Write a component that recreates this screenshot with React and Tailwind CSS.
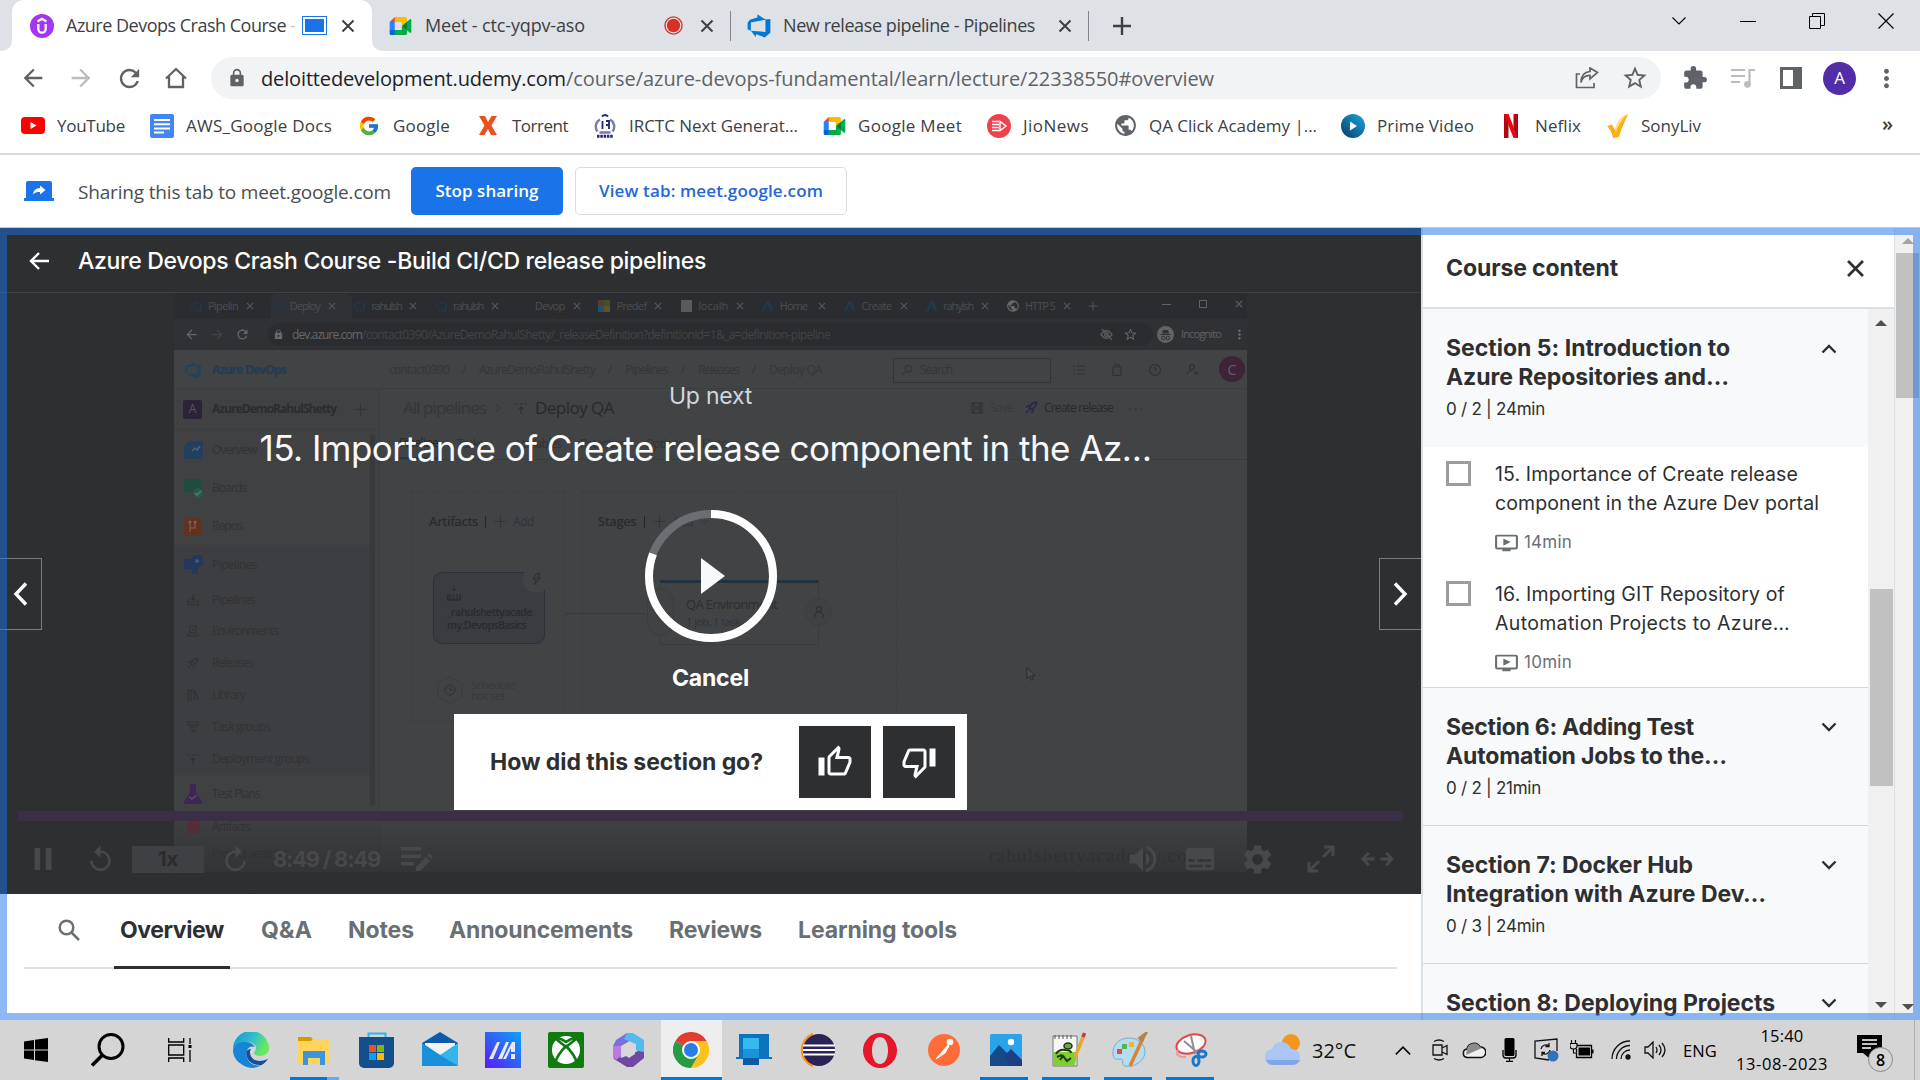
import React, { useLayoutEffect, useRef } from "react";
import {
  MdArrowBack, MdArrowForward, MdRefresh, MdLock, MdStarBorder, MdExtension,
  MdMoreVert, MdPause, MdReplay, MdVolumeUp, MdSubtitles, MdSettings, MdOutlineThumbUp, MdOutlineThumbDown,
  MdOndemandVideo, MdPublic, MdSearch,
} from "react-icons/md";
import { FcGoogle } from "react-icons/fc";

/* Single-line label whose letter spacing is adjusted to fill its own width. */
function Fit({ className = "", children }) {
  const outer = useRef(null);
  const inner = useRef(null);
  useLayoutEffect(() => {
    const el = inner.current;
    el.style.letterSpacing = "0px";
    const n = el.textContent.length;
    const free = outer.current.clientWidth - el.getBoundingClientRect().width;
    el.style.letterSpacing = `${free / n}px`;
  }, [children]);
  return (
    <span ref={outer} className={"block shrink-0 whitespace-nowrap " + className}>
      <span ref={inner} className="inline-block whitespace-pre">{children}</span>
    </span>
  );
}

/* ---------- small drawings ---------- */
const X = ({ className }) => (
  <svg viewBox="0 0 14 14" className={"shrink-0 " + className} fill="none" stroke="currentColor" strokeWidth="2">
    <path d="M1.5 1.5l11 11M12.5 1.5l-11 11" />
  </svg>
);
const Plus = ({ className }) => (
  <svg viewBox="0 0 14 14" className={"shrink-0 " + className} fill="none" stroke="currentColor">
    <path d="M7 .5v13M.5 7h13" />
  </svg>
);
const Azure = ({ className, fill = "#0078d7" }) => (
  <svg viewBox="0 0 16 16" className={"shrink-0 " + className} fill={fill}>
    <path d="M15 3.62v8.54L11.5 15 6.08 13v1.98L3 10.98l8.96.7V4.05zM12.03 4.1 7.01.8v2.02L2.4 4.2 1 5.98v4.06l1.98.86V5.8z" />
  </svg>
);
const Meet = ({ className }) => (
  <svg viewBox="0 0 24 20" className={"shrink-0 " + className}>
    <path fill="#00832d" d="M13.5 10l2.4 2.7 3.2 2 .6-4.8-.6-4.6-3.2 1.8z" />
    <path fill="#0066da" d="M0 14.5v4A1.5 1.5 0 0 0 1.5 20h4.1l.9-3-.9-2.5-2.800-.9z" />
    <path fill="#e94235" d="M5.600 0L0 5.500l2.900.8 2.700-.8.800-2.700z" />
    <path fill="#2684fc" d="M0 5.500h5.600v9H0z" />
    <path fill="#00ac47" d="M13.500 10v4.500H5.600V20h12a1.500 1.500 0 0 0 1.500-1.500v-3.800zM22.500 2.400l-3.400 2.900v9.400l3.400 2.800c.6.400 1.500 0 1.500-.7V3.100c0-.8-.9-1.100-1.500-.7z" />
    <path fill="#ffba00" d="M17.600 0h-12v5.500h7.900V10l5.600-4.700V1.500A1.500 1.500 0 0 0 17.600 0z" />
  </svg>
);
const Tick = ({ className, up, w = 2 }) => (
  <svg viewBox="0 0 16 10" className={"shrink-0 " + className} fill="none" stroke="currentColor" strokeWidth={w}>
    <path d={up ? "M1.500 8.500L8 2l6.500 6.500" : "M1.500 1.500L8 8l6.500-6.500"} />
  </svg>
);
const Replay = ({ className }) => <MdReplay className={"shrink-0 " + className} />;

/* ---------- browser chrome ---------- */
function TabStrip() {
  return (
    <div className="h-[51px] bg-[#dee1e6] flex items-center text-[#3c4043] text-[18px]">
      <div className="relative ml-[12px] w-[360px] h-full bg-white rounded-t-[12px] flex items-center">
        <svg viewBox="0 0 10 10" className="absolute -left-[10px] bottom-0 w-[10px] h-[10px]" fill="#fff"><path d="M10 0v10H0A10 10 0 0 0 10 0z" /></svg>
        <svg viewBox="0 0 10 10" className="absolute -right-[10px] bottom-0 w-[10px] h-[10px]" fill="#fff"><path d="M0 0v10h10A10 10 0 0 1 0 0z" /></svg>
        <svg viewBox="0 0 24 24" className="ml-[18px] w-[24px] h-[24px] shrink-0 mt-[1px]">
          <circle cx="12" cy="12" r="12" fill="#a435f0" />
          <path d="M7.500 7.500L12 4.800l4.500 2.700M8.300 10v5a3.700 3.700 0 0 0 7.400 0v-5" fill="none" stroke="#fff" strokeWidth="2.300" />
        </svg>
        <Fit className="ml-[12px] w-[220px]">Azure Devops Crash Course</Fit>
        <span className="w-[12px] text-[#c4c6c9] pl-[4px]">-</span>
        <div className="ml-[4px] w-[25px] h-[19px] border border-[#1a73e8] p-[2px]"><div className="w-full h-full bg-[#1a73e8]" /></div>
        <X className="ml-[14px] w-[14px] h-[14px]" />
      </div>
      <Meet className="ml-[17px] w-[23px] h-[18px]" />
      <Fit className="ml-[13px] w-[160px]">Meet - ctc-yqpv-aso</Fit>
      <svg viewBox="0 0 20 20" className="ml-[79px] w-[19px] h-[19px] shrink-0"><circle cx="10" cy="10" r="9" fill="none" stroke="#d93025" strokeWidth="1.400" /><circle cx="10" cy="10" r="7" fill="#d93025" /></svg>
      <X className="ml-[17px] w-[14px] h-[14px]" />
      <div className="ml-[16px] w-px h-[30px] bg-[#80868b]" />
      <Azure className="ml-[15px] w-[26px] h-[26px]" />
      <Fit className="ml-[11px] w-[252px]">New release pipeline - Pipelines</Fit>
      <X className="ml-[23px] w-[14px] h-[14px]" />
      <div className="ml-[16px] w-px h-[30px] bg-[#80868b]" />
      <svg viewBox="0 0 18 18" className="ml-[24px] w-[18px] h-[18px] shrink-0" stroke="#3c4043" strokeWidth="2.400"><path d="M9 0v18M0 9h18" /></svg>
      <div className="ml-auto mr-[26px] flex items-center gap-[53px] pb-[9px] text-black">
        <Tick w={1.100} className="w-[16px] h-[10px]" />
        <div className="w-[16px] h-px bg-black" />
        <svg viewBox="0 0 16 16" className="w-[16px] h-[16px]" fill="none" stroke="#000"><path d="M.5 3.500h11v12H.5zM3.500 3.500v-3h12v12h-4" /></svg>
        <svg viewBox="0 0 16 16" className="w-[16px] h-[16px]" fill="none" stroke="#000" strokeWidth="1.200"><path d="M.5.5l15 15M15.500.5l-15 15" /></svg>
      </div>
    </div>
  );
}

function Toolbar() {
  return (
    <div className="h-[54px] flex items-center text-[#5f6368] bg-white">
      <MdArrowBack className="ml-[19px] w-[28px] h-[28px] shrink-0" />
      <MdArrowForward className="ml-[20px] w-[28px] h-[28px] text-[#b9bbbe] shrink-0" />
      <MdRefresh className="ml-[20px] w-[29px] h-[29px] shrink-0" />
      <svg viewBox="0 0 22 22" className="ml-[21px] mr-[4px] w-[22px] h-[22px] shrink-0" fill="none" stroke="currentColor" strokeWidth="2.300"><path d="M1 11.500L11 2l10 9.500M4 9.500V20h4.500M18 9.500V20h-4.500M8.500 20h5" /></svg>
      <div className="ml-[20px] w-[1450px] h-[42px] rounded-full bg-[#f1f3f4] flex items-center text-[20px]">
        <MdLock className="ml-[16px] w-[20px] h-[20px]" />
        <Fit className="ml-[14px] mt-[2px] w-[305px] text-[#202124]">deloittedevelopment.udemy.com</Fit>
        <Fit className="mt-[2px] w-[648px]">/course/azure-devops-fundamental/learn/lecture/22338550#overview</Fit>
        <svg viewBox="0 0 24 22" className="ml-auto w-[24px] h-[22px]" fill="none" stroke="currentColor" strokeWidth="1.700"><path d="M5 7H1.500v13.500H19V16M6 15.500c.8-5 3.500-7 9-7.200V12l7.500-6.500L15 1v3.500C9 5 6 9 6 15.500z" /></svg>
        <MdStarBorder className="ml-[22px] mr-[12px] w-[28px] h-[28px]" />
      </div>
      <MdExtension className="ml-[21px] w-[26px] h-[26px] shrink-0" />
      <svg viewBox="0 0 24 20" className="ml-[23px] w-[24px] h-[20px] shrink-0 text-[#babcbe]" fill="none" stroke="currentColor" strokeWidth="2.200"><path d="M0 2h14M0 8h14M0 14h9M18.500 16V2H24" /><circle cx="16.500" cy="16.300" r="2.300" fill="currentColor" /></svg>
      <svg viewBox="0 0 22 22" className="ml-[25px] w-[22px] h-[22px] shrink-0"><path fill="#5f6368" fillRule="evenodd" d="M0 0h22v22H0zM3 3v16h10V3z" /></svg>
      <div className="ml-[21px] w-[33px] h-[33px] rounded-full bg-[#512da8] text-white text-[17px] flex items-center justify-center shrink-0">A</div>
      <MdMoreVert className="ml-[16px] w-[29px] h-[29px] shrink-0" />
    </div>
  );
}

function Bookmarks() {
  return (
    <div className="h-[50px] pb-[7px] flex items-center border-b-2 border-[#dadada] bg-white text-[17px] text-[#3c4043]">
      <svg viewBox="0 0 24 17" className="ml-[21px] w-[24px] h-[17px] shrink-0"><rect width="24" height="17" rx="4" fill="#f00" /><path d="M9.500 5v7l6-3.500z" fill="#fff" /></svg>
      <Fit className="ml-[12px] w-[68px]">YouTube</Fit>
      <svg viewBox="0 0 24 24" className="ml-[25px] w-[24px] h-[24px] shrink-0"><rect width="24" height="24" rx="2" fill="#4285f4" /><path d="M4 6h16M4 10.200h16M4 14.400h16M4 18.600h10" stroke="#fff" strokeWidth="2" /></svg>
      <Fit className="ml-[12px] w-[146px]">AWS_Google Docs</Fit>
      <FcGoogle className="ml-[26px] w-[22px] h-[22px] shrink-0" />
      <Fit className="ml-[13px] w-[57px]">Google</Fit>
      <svg viewBox="0 0 18 19" className="ml-[29px] w-[18px] h-[19px] shrink-0" fill="#e8501e"><path d="M0 0h6l3 6 3.500-6H18l-5.500 9.500L18 19h-6l-3-6-3.500 6H0l5.500-9.500z" /></svg>
      <Fit className="ml-[15px] w-[56px]">Torrent</Fit>
      <svg viewBox="0 0 22 24" className="ml-[26px] w-[22px] h-[24px] shrink-0" fill="none" stroke="#25257f"><path d="M6 5.500A8 8 0 0 0 3.500 17.500M16 5.500a8 8 0 0 1 2.500 12M5.500 18.500h11" strokeWidth="2.400" stroke="#7a7ab5" /><path d="M8 2.500q3-3 6 0" strokeWidth="2" /><path d="M8.500 7v8M12 7h3v8M12 11h3" strokeWidth="1.800" /><path d="M3 22.300h16" strokeWidth="3" strokeDasharray="2.500 .8" /></svg>
      <Fit className="ml-[13px] w-[169px]">IRCTC Next Generat...</Fit>
      <Meet className="ml-[25px] w-[23px] h-[18px]" />
      <Fit className="ml-[12px] w-[104px]">Google Meet</Fit>
      <svg viewBox="0 0 24 24" className="ml-[25px] w-[24px] h-[24px] shrink-0"><circle cx="12" cy="12" r="12" fill="#f0424e" /><path d="M5 7.500h7M5 10.500h7M5 13.500h7M5 16.500h7" stroke="#fff" strokeWidth="1.500" /><path d="M13 7.500v9l6-4.500z" stroke="#fff" strokeWidth="1.400" fill="none" /></svg>
      <Fit className="ml-[12px] w-[66px]">JioNews</Fit>
      <MdPublic className="ml-[24px] w-[25px] h-[25px] shrink-0 text-[#5f6368]" />
      <Fit className="ml-[11px] w-[168px]">QA Click Academy |...</Fit>
      <svg viewBox="0 0 24 24" className="ml-[24px] w-[24px] h-[24px] shrink-0"><defs><linearGradient id="pv" x1="1" y1="0" x2="0" y2="1"><stop stopColor="#1ba8dd" /><stop offset="1" stopColor="#063a6b" /></linearGradient></defs><circle cx="12" cy="12" r="12" fill="url(#pv)" /><path d="M9 7.500v9l7-4.500z" fill="#fff" /></svg>
      <Fit className="ml-[12px] w-[97px]">Prime Video</Fit>
      <svg viewBox="0 0 14 24" className="ml-[30px] w-[14px] h-[24px] shrink-0"><path d="M0 0h4.500v24H0zM9.500 0H14v24H9.500z" fill="#b1060f" /><path d="M0 0h4.500L14 24H9.500z" fill="#e50914" /></svg>
      <Fit className="ml-[17px] w-[46px]">Neflix</Fit>
      <svg viewBox="0 0 22 24" className="ml-[26px] w-[22px] h-[24px] shrink-0"><path d="M0 12l5-1.500 3 5.500C10 8 14 2 21 0c-1 3-7 15-9 23l-6 1C5 19 3 15 0 12z" fill="#fcaf17" /><path d="M21 0c-7 2-11 8-13 16l1 2C12 9 16 4 21 0z" fill="#fde27b" /></svg>
      <Fit className="ml-[12px] w-[60px]">SonyLiv</Fit>
      <span className="ml-auto mr-[27px] text-[20px] leading-none pb-[3px] text-[#3c4043] font-semibold">»</span>
    </div>
  );
}

function SharingBar() {
  return (
    <div className="h-[73px] bg-white flex items-center text-[#4a4d51] border-b border-[#c9c9cb]">
      <svg viewBox="0 0 30 20" className="ml-[24px] w-[30px] h-[20px] shrink-0"><path fill="#1a73e8" d="M2 2a2 2 0 0 1 2-2h22a2 2 0 0 1 2 2v15h2v3H0v-3h2z" /><path fill="#fff" d="M9 13.500c.6-4.500 3-6.200 7-6.500V4.500l5.500 4.500-5.500 4.500V11c-3.500 0-5 .5-7 2.500z" /></svg>
      <Fit className="ml-[24px] mt-[2px] w-[313px] text-[19px]">Sharing this tab to meet.google.com</Fit>
      <div className="ml-[20px] w-[152px] h-[48px] rounded-[5px] bg-[#1a73e8] flex items-center justify-center text-white font-semibold text-[17px]"><Fit className="w-[103px]">Stop sharing</Fit></div>
      <div className="ml-[12px] w-[272px] h-[48px] rounded-[5px] border border-[#dadce0] flex items-center justify-center text-[#2566d8] font-semibold text-[17px]"><Fit className="w-[224px]">View tab: meet.google.com</Fit></div>
    </div>
  );
}

/* ---------- dimmed lecture frame ---------- */
function FrameTab({ icon, text, active, w = "w-[30px]" }) {
  return (
    <div className={"h-[25px] w-[81.7px] flex items-center shrink-0 " + (active ? "bg-[#303135] rounded-t-[6px]" : "")}>
      <span className="w-[14px] h-[14px] flex items-center justify-center shrink-0">
        {icon === "az" && <Azure className="w-[13px] h-[13px]" fill="#1f3747" />}
        {icon === "ms" && <svg viewBox="0 0 12 12" className="w-[12px] h-[12px]"><path fill="#5c3a2a" d="M0 0h6v6H0z" /><path fill="#3f5329" d="M6 0h6v6H6z" /><path fill="#24506a" d="M0 6h6v6H0z" /><path fill="#625127" d="M6 6h6v6H6z" /></svg>}
        {icon === "box" && <span className="w-[11px] h-[12px] bg-[#5a5a58]" />}
        {icon === "a" && <svg viewBox="0 0 12 12" className="w-[13px] h-[12px]"><path fill="#20394c" d="M0 11L5 1h3l4 10H9L6 4 3 11z" /></svg>}
        {icon === "web" && <MdPublic className="w-[14px] h-[14px] text-[#66686a]" />}
      </span>
      <span className="ml-[5px] w-[31px] flex text-[11px] text-[#4c4e51]"><Fit className={w}>{text}</Fit></span>
      <X className="ml-[7px] w-[8px] h-[8px] text-[#55575a]" />
    </div>
  );
}

const NavItem = ({ h, glyph, w, children }) => (
  <div className={"flex items-center shrink-0 " + h}>
    <span className="ml-[9px] w-[20px] h-[20px] flex items-center justify-center">{glyph}</span>
    <Fit className={"ml-[9px] text-[12px] " + w}>{children}</Fit>
  </div>
);
const Glyph = ({ d }) => <svg viewBox="0 0 12 12" className="w-[12px] h-[12px]" fill="none" stroke="#2f3032" strokeWidth="1.100"><path d={d} /></svg>;
const Build = () => <svg viewBox="0 0 14 16" className="w-[14px] h-[16px]" fill="none" stroke="#2b2c2e"><path d="M.8 9v6h12.400V9" strokeWidth="1.500" /><path d="M7 0v6M5 4l2 2 2-2" /><path d="M2 10.500h10M2 13.500h10" strokeWidth="2" strokeDasharray="2 1.500" /></svg>;

function LectureFrame() {
  return (
    <div className="ml-[174px] w-[1073px] h-[601px] bg-[#424345] flex flex-col overflow-hidden text-[#323335]">
      <div className="h-[26px] bg-[#2b2c2f] flex items-center pl-[15px] shrink-0">
        <FrameTab icon="az" text="Pipelin" /><FrameTab icon="az" text="Deploy" active /><FrameTab icon="az" text="rahulsh" />
        <FrameTab icon="az" text="rahulsh" /><FrameTab text="Devop" /><FrameTab icon="ms" text="Predef" />
        <FrameTab icon="box" text="localh" /><FrameTab icon="a" text="Home" w="w-[27px]" /><FrameTab icon="a" text="Create" />
        <FrameTab icon="a" text="rahylsh" /><FrameTab icon="web" text="HTTP S" />
        <Plus className="w-[10px] h-[10px] text-[#606264]" />
        <div className="ml-auto mr-[4px] pb-[4px] flex items-center gap-[28px] text-[#606264]">
          <span className="w-[9px] h-px bg-[#606264]" /><span className="w-[8px] h-[8px] border border-[#606264]" /><X className="w-[8px] h-[8px]" />
        </div>
      </div>
      <div className="h-[31px] bg-[#303135] flex items-center text-[12px] text-[#434446] shrink-0">
        <MdArrowBack className="ml-[10px] w-[15px] h-[15px] text-[#66686a]" />
        <MdArrowForward className="ml-[11px] w-[15px] h-[15px]" />
        <MdRefresh className="ml-[10px] w-[15px] h-[15px] text-[#66686a]" />
        <div className="ml-[18px] h-[23px] w-[885px] rounded-full bg-[#2b2c2f] flex items-center">
          <MdLock className="ml-[5px] w-[11px] h-[11px] text-[#66686a]" />
          <Fit className="ml-[8px] mt-[1px] w-[70px] text-[#66686a]">dev.azure.com</Fit>
          <Fit className="mt-[1px] w-[468px]">/contact0390/AzureDemoRahulShetty/_releaseDefinition?definitionId=1&amp;_a=definition-pipeline</Fit>
          <svg viewBox="0 0 14 14" className="ml-auto w-[13px] h-[13px]" fill="none" stroke="#57595b" strokeWidth="1.500"><path d="M1 7q6-8 12 0-6 8-12 0zM2 1l11 12" /><circle cx="7" cy="7" r="2" /></svg>
          <MdStarBorder className="ml-[10px] mr-[15px] w-[15px] h-[15px] text-[#66686a]" />
        </div>
        <svg viewBox="0 0 17 17" className="ml-[4px] w-[17px] h-[17px]"><circle cx="8.500" cy="8.500" r="8.500" fill="#626466" /><path d="M6 4h5l1 3.500H5zM3.500 8h10v1h-10z" fill="#303135" /><path d="M4.500 12a1.800 1.800 0 1 1 3.600 0 1.800 1.800 0 0 1-3.600 0M9 12a1.800 1.800 0 1 1 3.600 0A1.800 1.800 0 0 1 9 12" fill="none" stroke="#303135" /></svg>
        <Fit className="ml-[7px] w-[40px] text-[11px] text-[#5f6163]">Incognito</Fit>
        <MdMoreVert className="ml-auto w-[15px] h-[15px] text-[#66686a]" />
      </div>
      <div className="h-[39px] pt-[2px] flex items-center text-[12px] text-[#353638] border-b border-[#3c3d3f] shrink-0">
        <Azure className="ml-[10px] w-[18px] h-[18px]" fill="#21435d" />
        <Fit className="ml-[10px] w-[74px] font-bold text-[#213c53]">Azure DevOps</Fit>
        <Fit className="ml-[103px] w-[60px]">contact0390</Fit><span className="w-[30px] text-center">/</span>
        <Fit className="w-[116px]">AzureDemoRahulShetty</Fit><span className="w-[30px] text-center">/</span>
        <Fit className="w-[43px]">Pipelines</Fit><span className="w-[30px] text-center">/</span>
        <Fit className="w-[41px]">Releases</Fit><span className="w-[30px] text-center">/</span>
        <Fit className="w-[53px]">Deploy QA</Fit>
        <div className="ml-[71px] w-[158px] h-[25px] border border-[#333436] flex items-center"><MdSearch className="ml-[6px] w-[14px] h-[14px] -scale-x-100" /><Fit className="ml-[6px] w-[32px]">Search</Fit></div>
        <div className="ml-[22px] flex items-center gap-[26px]">
          <Glyph d="M0 2h2M4 2h8M0 6h2M4 6h8M0 10h2M4 10h8" /><Glyph d="M2 3h8v8.500H2zM4 3V.8h4V3" /><Glyph d="M6 .6a5.400 5.400 0 1 1 0 10.800A5.400 5.400 0 0 1 6 .6M4.500 4.500q1.500-2 2.700 0Q7 6 6 6v1.500" /><Glyph d="M5 .6a2.500 2.500 0 1 1 0 5 2.500 2.500 0 0 1 0-5M0 11q1-5 5-5M7 9h4M9 7v4" />
        </div>
        <span className="ml-auto mr-[2px] mb-[2px] w-[26px] h-[26px] rounded-full bg-[#3d2437] text-[#66606a] text-[14px] flex items-center justify-center">C</span>
      </div>
      <div className="h-[483px] flex shrink-0">
        <div className="w-[206px] bg-[#404143] flex flex-col border-r border-[#3c3d3f]">
          <div className="h-[41px] flex items-center border-b border-[#3b3c3e] shrink-0">
            <span className="ml-[9px] w-[19px] h-[19px] rounded-[2px] bg-[#2d2337] text-[#5a5560] text-[12px] flex items-center justify-center">A</span>
            <Fit className="ml-[10px] w-[124px] text-[12px] font-bold text-[#2b2c2e]">AzureDemoRahulShetty</Fit>
            <Plus className="ml-[18px] w-[13px] h-[13px]" />
          </div>
          <div className="flex-1 flex">
            <div className="w-[196px]">
              <NavItem w="w-[45px]" h="h-[39px]" glyph={<svg viewBox="0 0 19 18" className="w-[19px] h-[18px]"><path fill="#233f5c" d="M5 0h14v18H0V6z" /><path d="M8 10l3-3 2 2 3-4" stroke="#4a6178" fill="none" strokeWidth="1.500" /></svg>}>Overview</NavItem>
              <NavItem w="w-[34px]" h="h-[38px]" glyph={<svg viewBox="0 0 19 19" className="w-[19px] h-[19px]"><path fill="#1f4b41" d="M0 0h17v13H0z" /><circle cx="14" cy="14" r="5" fill="#28594d" /><path d="M11 14l2 2 4-4" stroke="#5b766f" fill="none" strokeWidth="1.500" /></svg>}>Boards</NavItem>
              <NavItem w="w-[30px]" h="h-[38px]" glyph={<svg viewBox="0 0 18 19" className="w-[18px] h-[19px]"><path fill="#64301f" d="M4 0h10l4 4v15H0V4z" /><path d="M6 15V6M6 11h5V6" stroke="#84604f" fill="none" strokeWidth="1.200" /><circle cx="6" cy="5" r="1.500" fill="#84604f" /><circle cx="11" cy="5" r="1.500" fill="#84604f" /></svg>}>Repos</NavItem>
              <div className="bg-[#3d3e41] pb-[1px]">
                <NavItem w="w-[45px]" h="h-[39px]" glyph={<svg viewBox="0 0 19 19" className="w-[19px] h-[19px]"><path fill="#25365f" d="M0 4h7l3-4h9v9l-5 4v6H8v-5H0z" /><circle cx="13" cy="6" r="2" fill="#4a5878" /></svg>}>Pipelines</NavItem>
                <NavItem w="w-[43px]" h="h-[31px]" glyph={<Glyph d="M1 5v6h10V5M3 8h6M6 0v6M4 4l2 2 2-2" />}>Pipelines</NavItem>
                <NavItem w="w-[66px]" h="h-[32px]" glyph={<Glyph d="M3 1h6v7H3zM1 8v3h10V8M6 3v3" />}>Environments</NavItem>
                <NavItem w="w-[41px]" h="h-[32px]" glyph={<Glyph d="M11 1Q5 1 4 8Q10 7 11 1M4 4L1 6M8 8l-2 3M3 9l-2 2" />}>Releases</NavItem>
                <NavItem w="w-[33px]" h="h-[32px]" glyph={<Glyph d="M1 1v10h3V1zM4 1h3v10M8 2l3 9" />}>Library</NavItem>
                <NavItem w="w-[58px]" h="h-[32px]" glyph={<Glyph d="M1 1h10v3H1zM2 6h8M3 9h6M4 11h4" />}>Task groups</NavItem>
                <NavItem w="w-[97px]" h="h-[31px]" glyph={<Glyph d="M0 2h3M5 2h3M9.500 2h3M6 6v6M4 7l2-2 2 2" />}>Deployment groups</NavItem>
              </div>
              <NavItem w="w-[48px]" h="h-[37px]" glyph={<svg viewBox="0 0 18 20" className="w-[18px] h-[20px]"><path fill="#3d2654" d="M6 0h6v8l6 10v2H0v-2L6 8z" /><path d="M5 13l3 2 5-4" stroke="#5e4a70" fill="none" strokeWidth="1.500" /></svg>}>Test Plans</NavItem>
              <NavItem w="w-[38px]" h="h-[29px]" glyph={<span className="w-[13px] h-[13px] bg-[#5e2c38]" />}>Artifacts</NavItem>
              <div className="pl-[38px] text-[12px] pt-[4px]"><Fit className="w-[75px]">Project settings</Fit></div>
            </div>
            <span className="w-[5px] h-[370px] mt-[5px] bg-[#38393b]" />
          </div>
        </div>
        <div className="relative flex-1 flex flex-col">
          <div className="h-[39px] pb-[2px] flex items-center shrink-0">
            <Fit className="ml-[23px] w-[83px] text-[17px] text-[#353638]">All pipelines</Fit>
            <svg viewBox="0 0 6 10" className="ml-[9px] w-[6px] h-[10px]" fill="none" stroke="#333"><path d="M1 1l4 4-4 4" /></svg>
            <span className="ml-[14px] flex"><Glyph d="M0 2h3M5 2h3M9.500 2h3M6 6v6M4 7l2-2 2 2" /></span>
            <Fit className="ml-[8px] w-[79px] text-[17px] text-[#28292b]">Deploy QA</Fit>
            <div className="ml-auto mr-[102px] flex items-center text-[12px]">
              <Glyph d="M1 1h10v10H1zM3 1v4h6V1M3 11V7h6v4" /><Fit className="ml-[7px] w-[23px] text-[#3a3b3d]">Save</Fit>
              <svg viewBox="0 0 12 12" className="ml-[12px] w-[13px] h-[13px]" fill="none" stroke="#262a48" strokeWidth="1.600"><path d="M11 1Q5 1 4 8Q10 7 11 1M4 4L1 6M8 8l-2 3M3 9l-2 2" /></svg>
              <Fit className="ml-[6px] w-[69px] text-[#27282a]">Create release</Fit><span className="ml-[15px] tracking-[2px] text-[14px] leading-none pb-[6px]">...</span>
            </div>
          </div>
          <div className="h-[32px] border-b border-[#3b3c3e] flex items-center text-[12px] gap-[19px] pl-[19px] shrink-0">
            <div className="h-full flex items-center border-b-2 border-[#203a50] text-[#242526]"><Fit className="w-[39px]">Pipeline</Fit></div>
            <Fit className="w-[26px]">Tasks</Fit><Fit className="ml-[15px] w-[44px]">Variables</Fit><Fit className="w-[46px]">Retention</Fit><Fit className="w-[38px]">Options</Fit><Fit className="w-[35px]">History</Fit>
          </div>
          <div className="flex pt-[31px] pl-[32px] gap-[17px]">
            <div className="relative w-[153px] h-[231px] border border-dashed border-[#3c3d3f]">
              <div className="absolute left-[152px] top-[121px] w-[80px] h-px bg-[#38393b]" />
              <div className="h-[59px] flex items-center text-[13px] pl-[16px]"><Fit className="w-[49px] font-semibold text-[#2a2b2d]">Artifacts</Fit><span className="ml-[7px] w-px h-[12px] bg-[#242526]" /><Plus className="ml-[8px] w-[13px] h-[13px]" /><Fit className="ml-[6px] w-[21px] text-[12px] text-[#2a3540]">Add</Fit></div>
              <div className="relative mt-[21px] ml-[20px] w-[112px] h-[72px] rounded-[9px] border border-[#2b3039] bg-[#3a3c42] pl-[13px] pt-[12px] leading-[12.500px] text-[10.500px] font-semibold text-[#292a2c]">
                <Build />
                <Fit className="mt-[5px] w-[85px]">_rahulshettyacade</Fit><Fit className="w-[79px]">my.DevopsBasics</Fit>
                <span className="absolute -right-[5px] -top-[8px] w-[26px] h-[28px] rounded-full bg-[#424345] flex items-center justify-center"><Glyph d="M7 0L3 6h3L4 12l6-7H7.500L10 0z" /></span>
              </div>
              <div className="mt-[32px] ml-[24px] flex items-center gap-[8px] text-[11px] leading-[11px] text-[#38393b]">
                <svg viewBox="0 0 26 28" className="w-[26px] h-[28px]" fill="none" stroke="#3c3d3f"><path d="M13 1l12 6v14l-12 6-12-6V7z" /><circle cx="13" cy="14" r="5" stroke="#2f3032" /><path d="M13 11v3h3" stroke="#2f3032" /></svg>
                <div><Fit className="w-[44px]">Schedule</Fit><Fit className="w-[34px]">not set</Fit></div>
              </div>
            </div>
            <div className="w-[315px] h-[231px] border border-dashed border-[#3c3d3f]">
              <div className="h-[59px] flex items-center text-[13px] pl-[15px]"><Fit className="w-[38px] font-semibold text-[#2a2b2d]">Stages</Fit><span className="ml-[8px] w-px h-[12px] bg-[#242526]" /><Plus className="ml-[8px] w-[13px] h-[13px]" /><Fit className="ml-[6px] w-[21px] text-[12px] text-[#2a3540]">Add</Fit><Tick w={1.500} className="ml-[7px] w-[9px] h-[6px]" /></div>
              <div className="relative mt-[29px] ml-[77px] w-[159px] h-[65px] border border-[#3b3c3e] border-t-[3px] border-t-[#22313d] pl-[25px] pt-[12px]">
                <Fit className="w-[91px] text-[13px] leading-[19px] text-[#2d2e30]">QA Environment</Fit><Fit className="w-[54px] text-[11px] leading-[15px] text-[#2b343d]">1 job, 1 task</Fit>
                <span className="absolute -right-[14px] top-[15px] w-[27px] h-[28px] rounded-full bg-[#404143] border border-[#3e3f41] flex items-center justify-center"><Glyph d="M6 .6a2.500 2.500 0 1 1 0 5 2.500 2.500 0 0 1 0-5M1.500 11.500q0-5 4.500-5.500 4.500.5 4.500 5.500" /></span>
                <span className="absolute -left-[14px] top-[5px] w-[27px] h-[48px] rounded-full border border-[#3b3c3e] bg-[#414244]" />
              </div>
            </div>
          </div>
          <svg viewBox="0 0 12 16" className="absolute left-[646px] top-[277px] w-[11px] h-[16px]" fill="#4b4c4e" stroke="#29292b"><path d="M1 1v12l3-3 2 5 2-1-2-4h4z" /></svg>
          <div className="absolute left-[609px] top-[453px] font-['Liberation_Serif'] text-[19px]"><Fit className="w-[215px]">rahulshettyacademy.com</Fit></div>
        </div>
      </div>
      <div className="flex-1 bg-[#2b2d2f] flex items-center text-[11px] text-[#393b3c]"><span className="ml-[70px] tracking-[0.5px]">Type here to search</span></div>
    </div>
  );
}

/* ---------- player ---------- */
function Player() {
  return (
    <div className="relative w-[1421px] h-[666px] bg-[#2d2f31] overflow-hidden">
      <div className="h-[65px] border-b border-[#3e4143] flex items-center pt-[2px]">
        <svg viewBox="0 0 20 18" className="ml-[29px] w-[20px] h-[18px]" fill="none" stroke="#fff" strokeWidth="2.400"><path d="M20 9H2M10 1L2 9l8 8" /></svg>
        <Fit className="ml-[29px] w-[628px] text-[23px] font-medium text-white">Azure Devops Crash Course -Build CI/CD release pipelines</Fit>
      </div>
      <div className="font-['Open_Sans',sans-serif]"><LectureFrame /></div>

      {/* playback controls */}
      <div className="absolute inset-x-0 bottom-0 h-[84px] bg-gradient-to-b from-transparent to-[#2d2f31] text-[#46484b]">
        <div className="mx-[18px] mt-[1px] h-[10px] bg-[#3a2f45]" />
        <div className="mt-[11px] h-[54px] flex items-center">
          <MdPause className="ml-[26px] w-[34px] h-[38px]" preserveAspectRatio="none" />
          <Replay className="ml-[25px] w-[31px] h-[31px]" />
          <div className="ml-[16px] w-[72px] h-[27px] bg-[#3e4044] text-[#292b2d] text-[20px] font-bold flex items-center justify-center">1x</div>
          <Replay className="ml-[16px] w-[31px] h-[31px] -scale-x-100" />
          <Fit className="ml-[22px] w-[107px] text-[22px] font-bold">8:49 / 8:49</Fit>
          <svg viewBox="0 0 32 26" className="ml-[21px] w-[32px] h-[26px]" fill="currentColor"><path d="M0 1h20v3.500H0zM0 8.500h20V12H0zM0 16h13v3.500H0zM15 21l10-10 4 4-10 10h-4zM26.500 9.500l2-2 3.500 3.500-2 2z" /></svg>
          <MdVolumeUp className="ml-auto w-[36px] h-[36px]" />
          <MdSubtitles className="ml-[21px] w-[36px] h-[34px]" />
          <MdSettings className="ml-[22px] w-[35px] h-[35px]" />
          <svg viewBox="0 0 28 28" className="ml-[32px] w-[28px] h-[28px]" fill="none" stroke="currentColor" strokeWidth="3"><path d="M17 2h9v9M26 2L16 12M2 17v9h9M2 26l10-10" /></svg>
          <svg viewBox="0 0 34 16" className="ml-[26px] mr-[27px] w-[33px] h-[16px]" fill="none" stroke="currentColor" strokeWidth="3"><path d="M8 1.500L2 8l6 6.500M26 1.500L32 8l-6 6.500M2 8h12M20 8h12" /></svg>
        </div>
      </div>

      {/* up-next prompt */}
      <div className="absolute inset-x-0 top-[149px] flex flex-col items-center text-white">
        <Fit className="w-[83px] text-[23px] leading-[38px] text-[#d1d7dc]">Up next</Fit>
        <Fit className="w-[892px] mt-[11px] -ml-[10px] text-[35px] leading-[44px] text-[#f7f9fa]">15. Importance of Create release component in the Az…</Fit>
        <svg viewBox="0 0 132 132" className="mt-[40px] w-[132px] h-[132px]">
          <circle cx="66" cy="66" r="62" fill="none" stroke="#6a6f73" strokeWidth="8" />
          <circle cx="66" cy="66" r="62" fill="none" stroke="#fff" strokeWidth="8" pathLength="100" strokeDasharray="80.800 100" transform="rotate(-90 66 66)" />
          <path d="M56 48v36l24-18z" fill="#f7f9fa" />
        </svg>
        <Fit className="mt-[17px] w-[77px] text-[23px] leading-[38px] font-bold">Cancel</Fit>
        <div className="mt-[17px] w-[513px] h-[96px] bg-white flex items-center text-[#2d2f31]">
          <Fit className="ml-[36px] w-[273px] text-[23px] font-bold">How did this section go?</Fit>
          <div className="ml-[36px] w-[72px] h-[72px] bg-[#2d2f31] flex items-center justify-center"><MdOutlineThumbUp className="w-[36px] h-[36px] text-white" /></div>
          <div className="ml-[12px] w-[72px] h-[72px] bg-[#2d2f31] flex items-center justify-center"><MdOutlineThumbDown className="w-[36px] h-[36px] text-white" /></div>
        </div>
      </div>

      <div className="absolute left-0 top-[330px] w-[42px] h-[72px] border border-l-0 border-[#7a7c7e] bg-[#2d2f31] flex items-center justify-center">
        <svg viewBox="0 0 15 24" className="w-[15px] h-[24px]" fill="none" stroke="#fff" strokeWidth="3.400"><path d="M13 1.500L3 12l10 10.500" /></svg>
      </div>
      <div className="absolute right-0 top-[330px] w-[42px] h-[72px] border border-r-0 border-[#7a7c7e] bg-[#2d2f31] flex items-center justify-center">
        <svg viewBox="0 0 15 24" className="w-[15px] h-[24px]" fill="none" stroke="#fff" strokeWidth="3.400"><path d="M2 1.500L12 12 2 22.500" /></svg>
      </div>
    </div>
  );
}

function CourseTabs() {
  return (
    <div className="ml-[24px] w-[1373px] h-[75px] border-b-2 border-[#d9e1e7] flex items-center text-[23px] font-bold text-[#6a6f73]">
      <svg viewBox="0 0 22 22" className="ml-[34px] -mt-[1px] w-[22px] h-[22px]" fill="none" stroke="currentColor" strokeWidth="2.500"><circle cx="8.500" cy="8.500" r="6.800" /><path d="M13.500 13.500l7.500 7.500" /></svg>
      <div className="relative ml-[34px] w-[116px] h-[75px] -mb-[2px] flex items-center justify-center border-b-[3px] border-[#2d2f31] text-[#2d2f31]"><Fit className="w-[104px]">Overview</Fit></div>
      <Fit className="ml-[31px] w-[51px]">Q&amp;A</Fit>
      <Fit className="ml-[36px] w-[66px]">Notes</Fit>
      <Fit className="ml-[35px] w-[184px]">Announcements</Fit>
      <Fit className="ml-[36px] w-[93px]">Reviews</Fit>
      <Fit className="ml-[36px] w-[159px]">Learning tools</Fit>
    </div>
  );
}

/* ---------- course sidebar ---------- */
function Section({ a, b, sub, open, className = "" }) {
  return (
    <div className={"h-[138px] shrink-0 bg-[#f7f9fa] pl-[23px] pt-[25px] flex text-[#2d2f31] " + className}>
      <div className="w-[375px] text-[23px] leading-[29px] font-bold">
        {a}{b}
        <div className="mt-[4px] text-[17px] leading-[26px] font-normal">{sub}</div>
      </div>
      <Tick up={open} w={2.400} className={open ? "mt-[10px] w-[16px] h-[10px]" : "mt-[9px] w-[16px] h-[10px]"} />
    </div>
  );
}
function Lecture({ a, b, time }) {
  return (
    <div className="h-[120px] shrink-0 bg-white pl-[23px] pt-[13px] flex text-[#2d2f31]">
      <div className="mt-[1px] w-[25px] h-[25px] border-[3px] border-[#9a9c9e] shrink-0" />
      <div className="ml-[24px] text-[19.500px] leading-[29px]">
        {a}{b}
        <div className="mt-[10px] h-[29px] flex items-center text-[17px] text-[#6a6f73]">
          <MdOndemandVideo className="-ml-[1px] w-[25px] h-[22px]" preserveAspectRatio="none" />
          <Fit className="ml-[5px] w-[48px]">{time}</Fit>
        </div>
      </div>
    </div>
  );
}
const Tri = ({ down, fill }) => <svg viewBox="0 0 12 6" className="w-[12px] h-[6px]" fill={fill}><path d={down ? "M0 0h12L6 6z" : "M0 6h12L6 0z"} /></svg>;

function Sidebar() {
  return (
    <div className="w-[474px] h-[792px] border-l-2 border-r border-[#d9e1e7] bg-white flex flex-col overflow-hidden">
      <div className="h-[81px] pt-[2px] flex items-center border-b-2 border-[#d9e1e7] shrink-0 text-[#2d2f31]">
        <Fit className="ml-[23px] w-[172px] text-[23px] font-bold">Course content</Fit>
        <X className="ml-auto mr-[29px] w-[19px] h-[19px]" />
      </div>
      <div className="flex-1 min-h-0 flex">
        <div className="w-[445px] flex flex-col overflow-hidden">
          <Section open a={<Fit className="w-[284px]">Section 5: Introduction to</Fit>} b={<Fit className="w-[283px]">Azure Repositories and…</Fit>} sub={<Fit className="w-[99px]">0 / 2 | 24min</Fit>} />
          <Lecture a={<Fit className="w-[303px]">15. Importance of Create release</Fit>} b={<Fit className="w-[324px]">component in the Azure Dev portal</Fit>} time="14min" />
          <Lecture a={<Fit className="w-[290px]">16. Importing GIT Repository of</Fit>} b={<Fit className="w-[295px]">Automation Projects to Azure…</Fit>} time="10min" />
          <Section className="border-t border-[#d1d7dc]" a={<Fit className="w-[248px]">Section 6: Adding Test</Fit>} b={<Fit className="w-[281px]">Automation Jobs to the…</Fit>} sub={<Fit className="w-[95px]">0 / 2 | 21min</Fit>} />
          <Section className="border-t border-[#d1d7dc]" a={<Fit className="w-[247px]">Section 7: Docker Hub</Fit>} b={<Fit className="w-[320px]">Integration with Azure Dev…</Fit>} sub={<Fit className="w-[99px]">0 / 3 | 24min</Fit>} />
          <Section className="border-t border-[#d1d7dc]" a={<Fit className="w-[329px]">Section 8: Deploying Projects</Fit>} />
        </div>
        <div className="w-[26px] bg-[#f0f0f0] flex flex-col items-center pt-[11px] pb-[12px]">
          <Tri fill="#505050" />
          <div className="mt-[263px] w-[23px] h-[197px] bg-[#c1c1c1]" />
          <div className="flex-1" />
          <Tri down fill="#505050" />
        </div>
      </div>
    </div>
  );
}

/* ---------- Windows taskbar ---------- */
const Slot = ({ className = "", children }) => <div className={"w-[36px] h-[36px] shrink-0 " + className}>{children}</div>;
const Ico = ({ children }) => <svg viewBox="0 0 36 36" className="w-full h-full">{children}</svg>;
const Running = () => <div className="absolute -left-[8px] -bottom-[12px] w-[48px] h-[3px] bg-[#0078d7]" />;

function Taskbar() {
  return (
    <div className="h-[60px] bg-[#d5d5d6] flex items-center font-['Open_Sans',sans-serif]">
      <svg viewBox="0 0 24 24" className="ml-[24px] w-[24px] h-[24px] shrink-0"><path d="M0 3.400l10-1.400v9.400H0zM11 1.800L24 0v11.400H11zM0 12.400h10V22L0 20.600zM11 12.400h13V24l-13-1.800z" /></svg>
      <svg viewBox="0 0 34 34" className="ml-[43px] w-[34px] h-[34px] shrink-0" fill="none" stroke="#000" strokeWidth="3"><circle cx="20" cy="13.500" r="12" /><path d="M11.500 22L1 32.500" strokeWidth="3.500" /></svg>
      <svg viewBox="0 0 24 24" className="ml-[43px] w-[24px] h-[24px] shrink-0" fill="none" stroke="#000" strokeWidth="1.300"><path d="M.7 0v4h15V0M.7 7h15v10H.7zM.7 24v-4h15v4M22 0v6M22 12v12" /><path d="M20.500 7h3v3h-3z" fill="#000" stroke="none" /></svg>
      <Slot className="ml-[41px]"><Ico>
        <defs><linearGradient id="eg" x1="0" y1="0" x2="1" y2=".4"><stop stopColor="#0d90d8" /><stop offset=".6" stopColor="#35c1c9" /><stop offset="1" stopColor="#66eb5a" /></linearGradient></defs>
        <path d="M0 18a18 18 0 0 1 36-2c0 5-4 8-9 8-4 0-6-2-6-3s2-2 2-5-4-6-9-6C7 10 0 14 0 18z" fill="url(#eg)" />
        <path d="M0 18C1 12 7 9.500 13 10c5 0 8 3 8.500 5-4-2-8 1-8 7 0 8 7 13 15 11-5 3.500-12 4-18 .5C4 30 0 25 0 18z" fill="#1884d6" />
        <path d="M13.500 20c-1 8 6 14 15 13 3-1.500 5-4 6.500-6-9 4-17 2-18-6-.300-2 1-4 1-4s-4 0-4.500 3z" fill="#10509c" />
      </Ico></Slot>
      <Slot className="relative ml-[27px]"><Ico>
        <path d="M2 5h13l3 4v5H2z" fill="#d99b00" /><path d="M2 9h13l2-2h16v24H2z" fill="#ffd35c" /><path d="M7 19h22v14h-5v-7H12v7H7z" fill="#3b94dc" />
      </Ico><div className="absolute -left-[6px] -bottom-[12px] w-[37px] h-[3px] bg-[#0078d7]" /><div className="absolute left-[31px] -bottom-[12px] w-[12px] h-[3px] bg-[#66aee9]" /></Slot>
      <Slot className="ml-[27px]"><Ico>
        <path d="M9.500 6V1.500h17V6" fill="none" stroke="#31b5ee" strokeWidth="2" /><path d="M0 5h35v26a5 5 0 0 1-5 5H5a5 5 0 0 1-5-5z" fill="#154f8b" />
        <path fill="#f25022" d="M10 13h7v7h-7z" /><path fill="#7fba00" d="M18 13h7v7h-7z" /><path fill="#00a4ef" d="M10 21h7v7h-7z" /><path fill="#ffb900" d="M18 21h7v7h-7z" />
      </Ico></Slot>
      <Slot className="ml-[27px]"><Ico>
        <path d="M0 11L18 0l18 11v6H0z" fill="#0d5ba9" /><path d="M3 11h30v10L18 27 3 20z" fill="#f3f3f5" /><path d="M0 11l18 12L36 11v23H0z" fill="#35b5ee" /><path d="M0 11l18 12L36 34H0z" fill="#1c8fdc" />
      </Ico></Slot>
      <Slot className="ml-[27px]"><Ico>
        <defs><linearGradient id="my" x1="0" y1="1" x2="1" y2="0"><stop stopColor="#5a1bf2" /><stop offset="1" stopColor="#09a4fd" /></linearGradient></defs>
        <path fill="url(#my)" d="M0 0h36v36H0z" /><path d="M4 27L12 10h3L8 27zM13 27l8-17h3l-7 17zM18 27L27 10h3v10h-4v-4l-5 11zM26 22h4v5h-4z" fill="#e6e9ff" />
      </Ico></Slot>
      <Slot className="ml-[27px]"><Ico>
        <rect width="36" height="36" rx="2" fill="#107c10" /><circle cx="18" cy="18" r="14" fill="#fff" />
        <path d="M9 6c3 0 6 2 9 4 3-2 6-4 9-4M7 31c2-7 7-13 11-17 4 4 9 10 11 17M8 7l10 8L28 7" stroke="#107c10" strokeWidth="2.600" fill="none" />
      </Ico></Slot>
      <Slot className="ml-[27px]"><Ico>
        <path d="M16 1L5 8l-3 6v10l8 4V14l12-7z" fill="#7b6fdc" /><path d="M16 1h6l11 7v14l-8-4v-6l-12-5z" fill="#54b9ee" /><path d="M33 20v6l-11 9h-6L3 27l-1-4 8 3 8-3 9-4z" fill="#70489f" /><path d="M2 14h8v10l-5 4-3-4z" fill="#b87be0" /><path d="M18 11l6 4v7l-6 4-6-4v-7z" fill="#d8d8da" />
      </Ico></Slot>
      <div className="ml-[14px] w-[61px] h-[60px] bg-[#eeeeee] border-b-[3px] border-[#0078d7] flex items-center justify-center pt-[3px] shrink-0">
        <Slot className="-ml-[1px]"><Ico>
          <path d="M18 18L2.400 9A18 18 0 0 1 33.600 9z" fill="#e33b2e" /><path d="M18 18L2.400 9A18 18 0 0 0 18 36l8-13.500z" fill="#259b45" /><path d="M18 9h15.600A18 18 0 0 1 18 36l8-13.500z" fill="#fcc21b" />
          <circle cx="18" cy="18" r="9" fill="#fff" /><circle cx="18" cy="18" r="7" fill="#2a7de9" />
        </Ico></Slot>
      </div>
      <Slot className="ml-[14px]"><Ico>
        <path d="M3 2h30v23h3v2H0v-2h3z" fill="#0b74bd" /><path d="M7 6h16v27H7z" fill="#35b9ef" /><path d="M7 17h16v9H7z" fill="#1a92dc" /><path d="M7 26h16v7H7z" fill="#0a5ca8" />
      </Ico></Slot>
      <Slot className="ml-[27px]"><Ico>
        <path d="M14 2a17 17 0 0 0 0 32A18 18 0 0 1 14 2z" fill="#f7941e" stroke="#f7941e" strokeWidth="2" /><circle cx="20" cy="18" r="16" fill="#2c2255" /><path d="M4 13.500h32M4 18h32M4 22.500h32" stroke="#fff" strokeWidth="2" />
      </Ico></Slot>
      <Slot className="ml-[27px]"><Ico>
        <path fillRule="evenodd" fill="#e4172b" d="M18 1a17 17.500 0 1 1 0 35 17 17.500 0 0 1 0-35M18 5c-5 0-8 6-8 13.500S13 32 18 32s8-6 8-13.500S23 5 18 5z" />
      </Ico></Slot>
      <Slot className="ml-[28px]"><Ico>
        <circle cx="18" cy="18" r="16" fill="#ff6c37" /><circle cx="24" cy="10" r="3.300" fill="#fff" /><path d="M22 13L10 27l9-6 4-7z" fill="#fff" stroke="#fff" />
      </Ico></Slot>
      <Slot className="relative ml-[26px]"><Ico>
        <rect x="2" y="2" width="32" height="32" rx="1.500" fill="#29a3ea" /><path d="M2 24l9-11 14 14v7H2z" fill="#164a86" /><path d="M16 24l7-7 11 11v6H22z" fill="#1c3f83" /><circle cx="23" cy="10" r="3.200" fill="#fff" />
      </Ico><Running /></Slot>
      <Slot className="relative ml-[26px]"><Ico>
        <path d="M3 4h24v30H3z" fill="#f6f6f6" stroke="#777" /><path d="M3 20h24l-2 14H3z" fill="#7fcf2f" /><path d="M5 3v4M9 3v4M13 3v4M17 3v4M21 3v4" stroke="#555" /><path d="M6 22q3-5 9-4 6 0 6 3M10 28l3-4 4 5 4-3M7 25l5-2" stroke="#1d3b14" strokeWidth="2" fill="none" /><ellipse cx="18" cy="14" rx="4" ry="3" fill="#6aa84a" stroke="#1d3b14" strokeWidth="1.500" /><path d="M34 3L25 25" stroke="#e8a72d" strokeWidth="3.500" /><path d="M34.500 1L33 5" stroke="#c33b3b" strokeWidth="3.500" />
      </Ico><Running /></Slot>
      <Slot className="relative ml-[26px]"><Ico>
        <path d="M17 6C6 6 0 14 1 23c1 6 6 4 8 4 3 0 0 6 4 7 10 2 20-6 20-14S26 6 17 6z" fill="#b5dcf3" stroke="#79aecb" /><rect x="5" y="17" width="5" height="5" fill="#e04b3f" /><rect x="10" y="12" width="5" height="5" fill="#5cb04d" /><rect x="17" y="10" width="5" height="5" fill="#f2b52b" /><path d="M31 6L18 34" stroke="#e0842c" strokeWidth="3.500" /><path d="M35 0l-5 9-3-3z" fill="#b3834d" stroke="#b3834d" strokeWidth="2" />
      </Ico><Running /></Slot>
      <Slot className="relative ml-[26px]"><Ico>
        <ellipse cx="17" cy="12" rx="15" ry="9" transform="rotate(-18 17 12)" fill="#fafafa" stroke="#e0484a" strokeWidth="2" /><path d="M4 18q-4 7 8 7" stroke="#e89a9a" fill="none" strokeWidth="2" /><path d="M17 4l4 18M10 9l14 12" stroke="#8b8f94" strokeWidth="2" /><ellipse cx="28" cy="22" rx="4" ry="3" fill="none" stroke="#1978cc" strokeWidth="3" /><ellipse cx="22" cy="29" rx="3" ry="4.500" fill="none" stroke="#1978cc" strokeWidth="3" />
      </Ico><Running /></Slot>

      <svg viewBox="0 0 36 32" className="ml-auto w-[36px] h-[32px] shrink-0"><circle cx="26" cy="9" r="9" fill="#f3961f" /><path d="M8 31a8 8 0 0 1-1-16 10 10 0 0 1 19 0 8 8 0 0 1 2 16z" fill="#a9c6f5" /><path d="M8 31a8 8 0 0 1-7-5h34a8 8 0 0 1-7 5z" fill="#7ea7ea" /></svg>
      <Fit className="ml-[11px] mt-[2px] w-[44px] text-[20px] text-[#111]">32°C</Fit>
      <Tick up w={1.400} className="ml-[38px] w-[18px] h-[11px]" />
      <svg viewBox="0 0 16 22" className="ml-[20px] w-[16px] h-[22px] shrink-0" fill="none" stroke="#111" strokeWidth="1.300"><path d="M1 6h9v10H1zM10 9l5-2.500v9L10 13M2 2.500q5-3 10 0M2 19.500q5 3 10 0" /></svg>
      <svg viewBox="0 0 24 18" className="ml-[14px] w-[24px] h-[18px] shrink-0"><path d="M5 16.500a4.300 4.300 0 0 1 0-8.500A7 7 0 0 1 18 6a5 5 0 0 1 1 10.500z" fill="#efefef" stroke="#111" strokeWidth="1.500" /><path d="M5 8a7 7 0 0 1 13-2l2 1-16 7z" fill="#8b8b8b" /></svg>
      <svg viewBox="0 0 15 24" className="ml-[16px] w-[15px] h-[24px] shrink-0"><rect x="2.500" y="0" width="10" height="18" rx="1.500" /><path d="M1 12v5q0 3 3 3h7q3 0 3-3v-5M7.500 20v3M4 23.300h7" fill="none" stroke="#000" strokeWidth="1.300" /></svg>
      <svg viewBox="0 0 25 24" className="ml-[17px] w-[25px] h-[24px] shrink-0" fill="none" stroke="#111" strokeWidth="1.300"><path d="M15 22L1 20V3l22-2v12M7 11a5 5 0 0 1 8-3M15 5v3.500h-3.500M16 12a5 5 0 0 1-8 3M8 18v-3.500h3" /><circle cx="19" cy="18" r="5.500" fill="#2e74bd" stroke="none" /></svg>
      <svg viewBox="0 0 24 20" className="ml-[11px] w-[24px] h-[20px] shrink-0"><path d="M7 5.500h14.500v12H6.500V9" fill="#d5d5d6" stroke="#000" strokeWidth="1.300" /><path d="M8.500 7.500H20v8H8.500z" /><path d="M22.800 9.500v4" stroke="#000" strokeWidth="1.500" /><path d="M0 3.500h7V6q0 3-3.500 3T0 6zM1.500 0v3M5.500 0v3M3.500 9v4H7" stroke="#000" fill="#d5d5d6" strokeWidth="1.200" /></svg>
      <svg viewBox="0 0 20 20" className="ml-[17px] w-[20px] h-[20px] shrink-0" fill="none" stroke="#111" strokeWidth="1.300"><path d="M1 19A18 18 0 0 1 19 1M5.500 19A13.500 13.500 0 0 1 19 5.500M10 19a9 9 0 0 1 9-9" /><circle cx="17" cy="17" r="2" fill="#111" /></svg>
      <svg viewBox="0 0 22 18" className="ml-[13px] w-[22px] h-[18px] shrink-0" fill="none" stroke="#111" strokeWidth="1.300"><path d="M1 6v6h3l5 5V1L4 6zM12 6q2 3 0 6M15 4q4 5 0 10M18 2q6 7 0 14" /></svg>
      <Fit className="ml-[17px] mt-[2px] w-[34px] text-[16.500px] text-black">ENG</Fit>
      <div className="ml-[19px] w-[92px] flex flex-col items-center text-[16.500px] leading-[28px] text-black shrink-0"><Fit className="w-[43px]">15:40</Fit><Fit className="w-[92px]">13-08-2023</Fit></div>
      <div className="relative ml-[29px] mr-[32px] w-[25px] h-[30px] shrink-0">
        <svg viewBox="0 0 25 24" className="w-[25px] h-[24px]"><path d="M0 0h25v18H13v6l-7-6H0z" /><path d="M5 5h15M5 9h15M5 13h9" stroke="#fff" strokeWidth="1.400" /></svg>
        <span className="absolute left-[11px] top-[12px] w-[25px] h-[25px] rounded-full bg-[#d5d5d6] border border-[#888] text-[16px] font-semibold flex items-center justify-center">8</span>
      </div>
      <div className="w-px h-full bg-[#aeaeb0] mr-[5px] shrink-0" />
    </div>
  );
}

export default function App() {
  return (
    <div className="w-[1920px] h-[1080px] overflow-hidden bg-white flex flex-col font-['Inter',sans-serif]">
      <div className="font-['Open_Sans',sans-serif]">
        <TabStrip />
        <Toolbar />
        <Bookmarks />
        <SharingBar />
      </div>
      <div className="relative h-[792px] flex">
        <div className="w-[1421px]">
          <Player />
          <CourseTabs />
        </div>
        <Sidebar />
        <div className="w-[25px] h-full bg-[#f0f0f0] flex flex-col items-center pt-[10px] pb-[10px]">
          <Tri fill="#a3a3a3" />
          <div className="mt-[9px] w-[23px] h-[145px] bg-[#c1c1c1]" />
          <div className="flex-1" />
          <Tri down fill="#505050" />
        </div>
        <div className="absolute inset-0 border-[7px] border-[#1a73e8]/50" />
      </div>
      <Taskbar />
    </div>
  );
}
